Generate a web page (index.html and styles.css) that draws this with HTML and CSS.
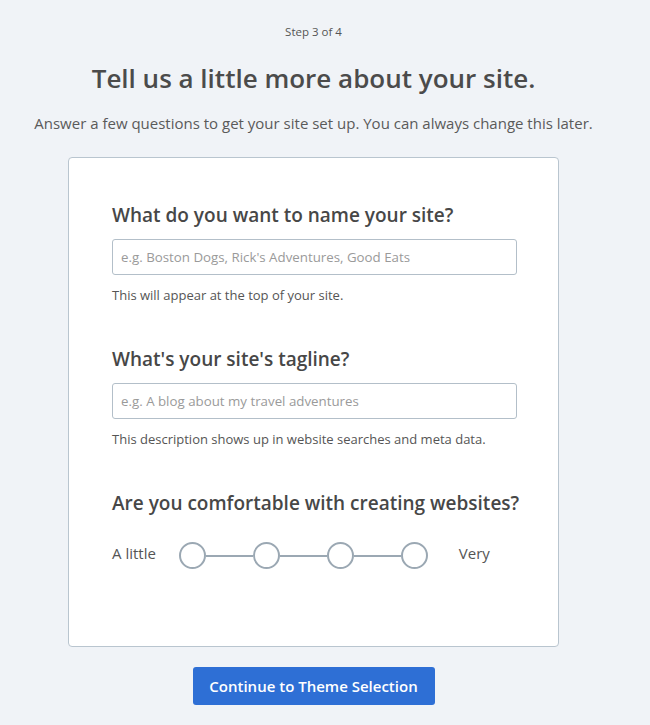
FILE: index.html
```html
<!DOCTYPE html>
<html lang="en">
<head>
    <meta charset="UTF-8">
    <meta name="viewport" content="width=device-width, initial-scale=1.0">
    <title>Site Setup</title>
    <link rel="stylesheet" href="styles.css">
</head>
<body>

<div class="page">
    <p class="step">Step 3 of 4</p>
    <h1>Tell us a little more about your site.</h1>
    <p class="intro">Answer a few questions to get your site set up. You can always change this later.</p>

    <div class="card">
        <!-- Site name -->
        <div class="field">
            <h3>What do you want to name your site?</h3>
            <input type="text" placeholder="e.g. Boston Dogs, Rick's Adventures, Good Eats">
            <p class="help">This will appear at the top of your site.</p>
        </div>

        <!-- Tagline -->
        <div class="field">
            <h3>What's your site's tagline?</h3>
            <input type="text" placeholder="e.g. A blog about my travel adventures">
            <p class="help">This description shows up in website searches and meta data.</p>
        </div>

        <!-- Comfort level -->
        <div class="field">
            <h3>Are you comfortable with creating websites?</h3>
            <div class="scale">
                <span class="scale-label">A little</span>
                <div class="dots">
                    <span class="dot"></span>
                    <span class="bar"></span>
                    <span class="dot"></span>
                    <span class="bar"></span>
                    <span class="dot"></span>
                    <span class="bar"></span>
                    <span class="dot"></span>
                </div>
                <span class="scale-label very">Very</span>
            </div>
        </div>
    </div>

    <button class="btn">Continue to Theme Selection</button>
</div>

</body>
</html>
```

FILE: styles.css
```css
body {
    font-family: "Open Sans", Arial, sans-serif;
    margin: 0;
    padding: 0;
    background: #f0f3f7;
    color: #555;
}
.page {
    display: flex;
    flex-direction: column;
    align-items: center;
    padding: 24px 23px 0 0;
}
.step {
    margin: 0;
    font-size: 11.5px;
    line-height: 16px;
    color: #555;
}
h1 {
    margin: 21px 0 0;
    font-size: 26px;
    line-height: 34px;
    font-weight: 600;
    color: #4b4b4b;
}
.intro {
    margin: 18px 0 0;
    font-size: 15px;
    line-height: 20px;
    color: #5a5a5a;
}
.card {
    box-sizing: border-box;
    width: 491px;
    margin-top: 24px;
    padding: 45px 43px 77px;
    background: #fff;
    border: 1px solid #b9c5cf;
    border-radius: 4px;
}
.field + .field {
    margin-top: 43px;
}
.field h3 {
    margin: 0;
    font-size: 19px;
    line-height: 24px;
    font-weight: 600;
    color: #474747;
    white-space: nowrap;
}
.field input {
    box-sizing: border-box;
    display: block;
    width: 405px;
    height: 36px;
    margin-top: 12px;
    padding: 0 8px;
    border: 1px solid #b3bfc9;
    border-radius: 3px;
    font-family: inherit;
    font-size: 13.3px;
    color: #444;
}
.field input::placeholder {
    color: #9a9a9a;
}
.help {
    margin: 11px 0 0;
    font-size: 13px;
    line-height: 18px;
    color: #555;
}
.scale {
    display: flex;
    align-items: center;
    margin-top: 27px;
}
.scale-label {
    font-size: 15px;
    color: #555;
    margin-top: -6px;
}
.scale-label.very {
    margin-left: 31px;
}
.dots {
    display: flex;
    align-items: center;
    margin-left: 23px;
}
.dot {
    box-sizing: border-box;
    width: 27px;
    height: 27px;
    border: 2px solid #9ba8b3;
    border-radius: 50%;
    background: #fff;
}
.bar {
    width: 47px;
    height: 2px;
    background: #9ba8b3;
}
.btn {
    margin-top: 20px;
    width: 242px;
    height: 38px;
    background: #2e6fd5;
    color: #fff;
    border: none;
    border-radius: 3px;
    font-family: inherit;
    font-size: 15px;
    font-weight: 600;
    cursor: pointer;
}
.btn:hover {
    background: #255fbb;
}
```
